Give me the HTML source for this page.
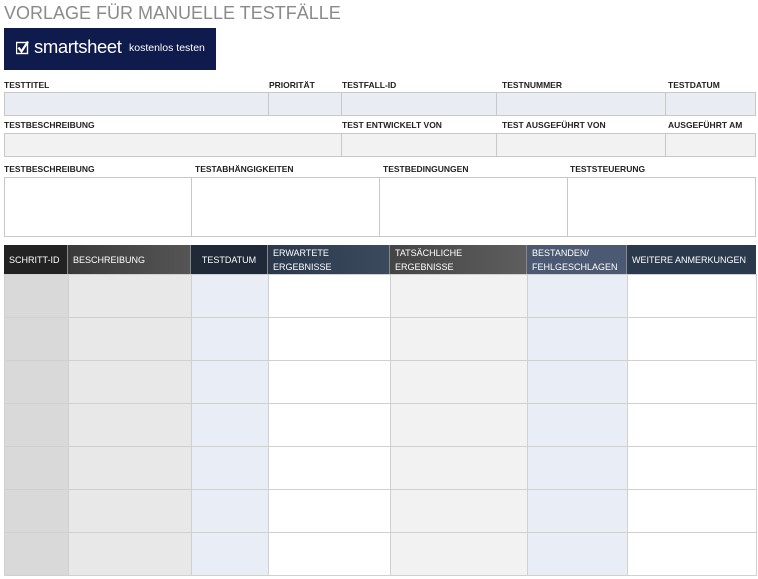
<!DOCTYPE html>
<html><head><meta charset="utf-8"><style>
body{margin:0;width:758px;height:579px;background:#fff;font-family:"Liberation Sans",sans-serif;position:relative;overflow:hidden}
.a{position:absolute;box-sizing:border-box}
.t{position:absolute;font-size:8.5px;font-weight:bold;color:#222;white-space:nowrap}
.b{position:absolute;box-sizing:border-box;border:1px solid #c8c8c8}
.h{position:absolute;box-sizing:border-box;color:#fff;font-size:9px;padding:0 5px;display:flex;align-items:center;line-height:14px;border-right:1px solid #888}
</style></head><body>
<div class="a" style="left:4px;top:3px;font-size:18px;color:#8a8a8a;letter-spacing:0px">VORLAGE FÜR MANUELLE TESTFÄLLE</div>
<div class="a" style="left:4px;top:28px;width:212px;height:42px;background:#0f1b4c;color:#fff">
<svg class="a" style="left:12px;top:13px" width="13" height="14" viewBox="0 0 13 14"><rect x="0.5" y="1.5" width="11" height="11" fill="none" stroke="#fff" stroke-width="1.4"/><path d="M2.5 6.5 L5.5 10.5 L12 0.5" fill="none" stroke="#fff" stroke-width="2.2"/></svg>
<span class="a" style="left:30px;top:8px;font-size:18.5px;letter-spacing:-0.4px">smartsheet</span>
<span class="a" style="left:125px;top:14px;font-size:10.5px">kostenlos testen</span>
</div>
<div class="t" style="left:4px;top:80px">TESTTITEL</div>
<div class="t" style="left:269px;top:80px">PRIORITÄT</div>
<div class="t" style="left:342px;top:80px">TESTFALL-ID</div>
<div class="t" style="left:502px;top:80px">TESTNUMMER</div>
<div class="t" style="left:668px;top:80px">TESTDATUM</div>
<div class="b" style="left:4px;top:92px;width:265px;height:24px;background:#e9ecf3"></div>
<div class="b" style="left:268px;top:92px;width:74px;height:24px;background:#e9ecf3"></div>
<div class="b" style="left:341px;top:92px;width:156px;height:24px;background:#e9ecf3"></div>
<div class="b" style="left:496px;top:92px;width:170px;height:24px;background:#e9ecf3"></div>
<div class="b" style="left:665px;top:92px;width:91px;height:24px;background:#e9ecf3"></div>
<div class="t" style="left:4px;top:120px">TESTBESCHREIBUNG</div>
<div class="t" style="left:342px;top:120px">TEST ENTWICKELT VON</div>
<div class="t" style="left:502px;top:120px">TEST AUSGEFÜHRT VON</div>
<div class="t" style="left:668px;top:120px">AUSGEFÜHRT AM</div>
<div class="b" style="left:4px;top:133px;width:338px;height:24px;background:#f2f2f2"></div>
<div class="b" style="left:341px;top:133px;width:156px;height:24px;background:#f2f2f2"></div>
<div class="b" style="left:496px;top:133px;width:170px;height:24px;background:#f2f2f2"></div>
<div class="b" style="left:665px;top:133px;width:91px;height:24px;background:#f2f2f2"></div>
<div class="t" style="left:4px;top:164px">TESTBESCHREIBUNG</div>
<div class="t" style="left:195px;top:164px">TESTABHÄNGIGKEITEN</div>
<div class="t" style="left:383px;top:164px">TESTBEDINGUNGEN</div>
<div class="t" style="left:570px;top:164px">TESTSTEUERUNG</div>
<div class="b" style="left:4px;top:177px;width:188px;height:60px"></div>
<div class="b" style="left:191px;top:177px;width:189px;height:60px"></div>
<div class="b" style="left:379px;top:177px;width:189px;height:60px"></div>
<div class="b" style="left:567px;top:177px;width:189px;height:60px"></div>
<div class="h" style="left:4px;top:245px;width:64px;height:29px;background:#222">SCHRITT-ID</div>
<div class="h" style="left:68px;top:245px;width:123px;height:29px;background:linear-gradient(90deg,#3a3a3a,#555)">BESCHREIBUNG</div>
<div class="h" style="left:191px;top:245px;width:77px;height:29px;background:#1f2937;justify-content:center">TESTDATUM</div>
<div class="h" style="left:268px;top:245px;width:122px;height:29px;background:linear-gradient(90deg,#2a384c,#3c4a5e)">ERWARTETE<br>ERGEBNISSE</div>
<div class="h" style="left:390px;top:245px;width:137px;height:29px;background:linear-gradient(90deg,#444,#5e5e5e)">TATSÄCHLICHE<br>ERGEBNISSE</div>
<div class="h" style="left:527px;top:245px;width:100px;height:29px;background:#4b5a72">BESTANDEN/<br>FEHLGESCHLAGEN</div>
<div class="h" style="left:627px;top:245px;width:129px;height:29px;background:#2b394d;border-right:none">WEITERE ANMERKUNGEN</div>
<div id="rows"></div>
<script>
var xs=[4,68,191,268,390,527,627,756],cs=['#d9d9d9','#e8e8e8','#e9edf5','#fff','#f2f2f2','#e9edf5','#fff'],h='';
for(var r=0;r<7;r++)for(var c=0;c<7;c++)h+='<div class="b" style="left:'+xs[c]+'px;top:'+(274+r*43)+'px;width:'+(xs[c+1]-xs[c]+1)+'px;height:44px;background:'+cs[c]+';border-color:#d0d0d0"></div>';
document.getElementById('rows').innerHTML=h;
</script>
</body></html>
